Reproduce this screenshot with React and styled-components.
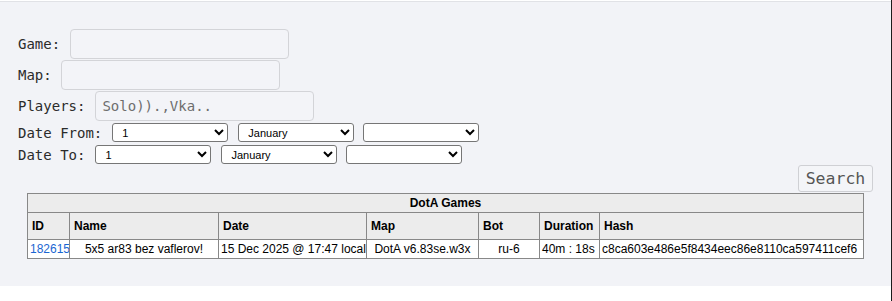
import React from 'react';
import styled, { createGlobalStyle } from 'styled-components';

const Global = createGlobalStyle`
  html, body { margin: 0; padding: 0; background: #fff; }
  body { font-family: "DejaVu Sans Mono", monospace; }
`;

const Page = styled.div`
  min-height: 100vh;
  box-sizing: border-box;
  border-right: 1px solid #1c1c1c;
  padding-top: 1px;
`;

const Panel = styled.form`
  background: #f2f3f7;
  border-top: 1px solid #e1e2e6;
  padding: 27px 18px 27px 18px;
  display: flex;
  flex-direction: column;
`;

const Row = styled.div`
  display: flex;
  align-items: center;
  margin-top: ${(p) => p.$mt || 0}px;
`;

const Label = styled.label`
  font: 14px "DejaVu Sans Mono", monospace;
  color: #2b2b2b;
  margin-right: ${(p) => p.$gap || 10}px;
  white-space: pre;
`;

const TextInput = styled.input`
  box-sizing: border-box;
  width: 219px;
  height: 30px;
  border: 1px solid #d3d4d8;
  border-radius: 4px;
  background: #f3f4f8;
  font: 14px "DejaVu Sans Mono", monospace;
  color: #555;
  padding: 0 6px;
  outline: none;
  &::placeholder { color: #6e6e6e; }
`;

const Select = styled.select`
  box-sizing: border-box;
  width: 116px;
  height: 19px;
  font: 11px "Liberation Sans", Arial, sans-serif;
  color: #000;
  background: #fff;
  border: 1px solid #767676;
  border-radius: 3px;
  padding: 0 0 0 5px;
  margin-right: ${(p) => p.$mr || 0}px;
`;

const SearchButton = styled.button`
  align-self: flex-end;
  margin-top: 1px;
  box-sizing: border-box;
  width: 75px;
  height: 27px;
  padding: 0;
  font: 16.5px "DejaVu Sans Mono", monospace;
  color: #555;
  background: #f4f5f8;
  border: 1px solid #cfd0d4;
  border-radius: 3px;
`;

const GamesTable = styled.table`
  margin: 1px auto 0;
  border-collapse: collapse;
  table-layout: fixed;
  width: 836px;
  font: 12px "Liberation Sans", Arial, sans-serif;
  color: #000;
`;

const CaptionCell = styled.th`
  background: #ececec;
  border: 1px solid #888;
  text-align: center;
  font-weight: bold;
  height: 18px;
  padding: 0;
`;

const HeadCell = styled.th`
  background: #ececec;
  border: 1px solid #888;
  text-align: left;
  font-weight: bold;
  height: 26px;
  padding: 0 4px;
  white-space: nowrap;
`;

const Cell = styled.td`
  background: #fff;
  border: 1px solid #888;
  text-align: ${(p) => p.$align || 'left'};
  height: 18px;
  padding: 0 2px;
  white-space: nowrap;
  overflow: hidden;
`;

const GameLink = styled.a`
  color: #1a66d2;
  text-decoration: none;
`;

const cols = [42, 149, 148, 112, 61, 60, 264];

function DateSelects() {
  return (
    <>
      <Select $mr={10} defaultValue="1">
        <option value="1">1</option>
      </Select>
      <Select $mr={9} defaultValue="January">
        <option value="January">January</option>
      </Select>
      <Select defaultValue="">
        <option value=""></option>
      </Select>
    </>
  );
}

export default function App() {
  return (
    <Page>
      <Global />
      <Panel onSubmit={(e) => e.preventDefault()}>
        <Row>
          <Label>Game:</Label>
          <TextInput />
        </Row>
        <Row $mt={1}>
          <Label $gap={9}>Map:</Label>
          <TextInput />
        </Row>
        <Row $mt={1}>
          <Label>Players:</Label>
          <TextInput placeholder="Solo)).,Vka.." />
        </Row>
        <Row $mt={2}>
          <Label>Date From:</Label>
          <DateSelects />
        </Row>
        <Row $mt={3}>
          <Label>Date To:</Label>
          <DateSelects />
        </Row>
        <SearchButton type="submit">Search</SearchButton>
        <GamesTable>
          <colgroup>
            {cols.map((w, i) => (
              <col key={i} style={{ width: w }} />
            ))}
          </colgroup>
          <thead>
            <tr>
              <CaptionCell colSpan={7}>DotA Games</CaptionCell>
            </tr>
            <tr>
              <HeadCell>ID</HeadCell>
              <HeadCell>Name</HeadCell>
              <HeadCell>Date</HeadCell>
              <HeadCell>Map</HeadCell>
              <HeadCell>Bot</HeadCell>
              <HeadCell>Duration</HeadCell>
              <HeadCell>Hash</HeadCell>
            </tr>
          </thead>
          <tbody>
            <tr>
              <Cell>
                <GameLink href="#">182615</GameLink>
              </Cell>
              <Cell $align="center">5x5 ar83 bez vaflerov!</Cell>
              <Cell>15 Dec 2025 @ 17:47 local</Cell>
              <Cell $align="center">DotA v6.83se.w3x</Cell>
              <Cell $align="center">ru-6</Cell>
              <Cell>40m : 18s</Cell>
              <Cell>c8ca603e486e5f8434eec86e8110ca597411cef6</Cell>
            </tr>
          </tbody>
        </GamesTable>
      </Panel>
    </Page>
  );
}
